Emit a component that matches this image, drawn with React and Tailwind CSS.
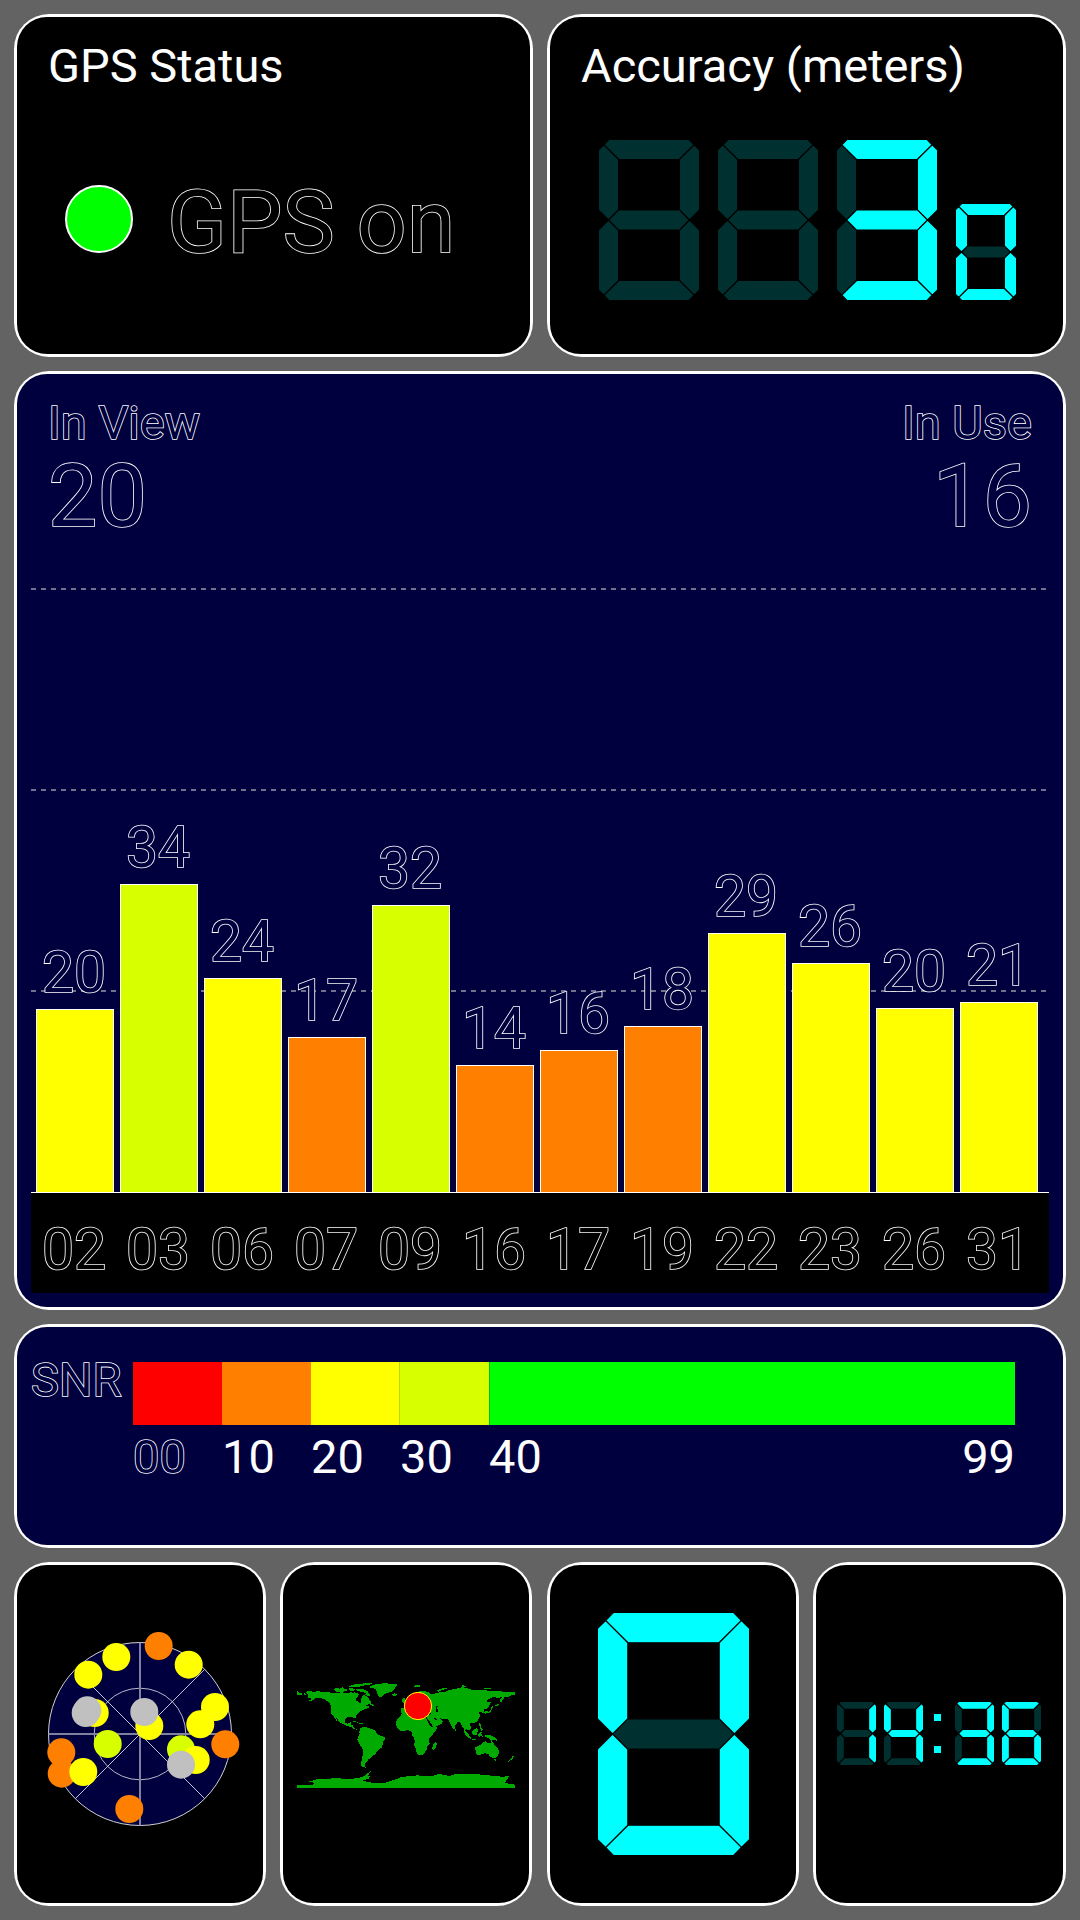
const CYAN = "#00ffff";
const DIM = "#003030";

const SEGMENTS = {
  a: [[0.27, 0.27], [0.53, 0], [4.47, 0], [4.73, 0.27], [4, 1], [1, 1]],
  b: [[5, 0.53], [4.73, 0.27], [4, 1], [4, 3.5], [4.5, 4], [5, 3.5]],
  c: [[5, 7.47], [4.73, 7.73], [4, 7], [4, 4.5], [4.5, 4], [5, 4.5]],
  d: [[0.27, 7.73], [0.53, 8], [4.47, 8], [4.73, 7.73], [4, 7], [1, 7]],
  e: [[0, 7.47], [0.27, 7.73], [1, 7], [1, 4.5], [0.5, 4], [0, 4.5]],
  f: [[0, 0.53], [0.27, 0.27], [1, 1], [1, 3.5], [0.5, 4], [0, 3.5]],
  g: [[0.5, 4], [1, 3.5], [4, 3.5], [4.5, 4], [4, 4.5], [1, 4.5]],
};

const LIT = {
  0: "abcdef",
  1: "bc",
  3: "abcdg",
  4: "bcfg",
  6: "acdefg",
};

/* The view box is trimmed by half a gap so the outer edges stay flush. */
function Digit({ value, className, width }) {
  const lit = LIT[value] || "";
  const keys = Object.keys(SEGMENTS).sort((x, y) => lit.includes(x) - lit.includes(y));
  const trim = (0.6 * 5) / width;
  return (
    <svg
      viewBox={`${trim} ${trim} ${5 - 2 * trim} ${8 - 2 * trim}`}
      preserveAspectRatio="none"
      className={className}
    >
      {keys.map((k) => (
        <polygon
          key={k}
          points={SEGMENTS[k].map((p) => p.join(",")).join(" ")}
          fill={lit.includes(k) ? CYAN : DIM}
          stroke="#000"
          strokeWidth="1.2"
          vectorEffect="non-scaling-stroke"
        />
      ))}
    </svg>
  );
}

function Panel({ className = "", outer = "", children }) {
  return (
    <section className={"rounded-[35px] bg-white p-[3px] " + outer}>
      <div className={"h-full w-full rounded-[30px] " + className}>{children}</div>
    </section>
  );
}

const ON_BLACK = "font-[370] text-black [-webkit-text-stroke:1.6px_white] [paint-order:stroke_fill]";
const ON_NAVY = "font-[370] text-[#00003f] [-webkit-text-stroke:1.6px_white] [paint-order:stroke_fill]";

const BARS = [
  { id: "02", snr: 20, h: 183, color: "bg-[#ffff00]" },
  { id: "03", snr: 34, h: 308, color: "bg-[#d8ff00]" },
  { id: "06", snr: 24, h: 214, color: "bg-[#ffff00]" },
  { id: "07", snr: 17, h: 155, color: "bg-[#ff8000]" },
  { id: "09", snr: 32, h: 287, color: "bg-[#d8ff00]" },
  { id: "16", snr: 14, h: 127, color: "bg-[#ff8000]" },
  { id: "17", snr: 16, h: 142, color: "bg-[#ff8000]" },
  { id: "19", snr: 18, h: 166, color: "bg-[#ff8000]" },
  { id: "22", snr: 29, h: 259, color: "bg-[#ffff00]" },
  { id: "23", snr: 26, h: 229, color: "bg-[#ffff00]" },
  { id: "26", snr: 20, h: 184, color: "bg-[#ffff00]" },
  { id: "31", snr: 21, h: 190, color: "bg-[#ffff00]" },
];

const SCALE = [
  { label: "00", grow: 89, color: "bg-[#ff0000]" },
  { label: "10", grow: 89, color: "bg-[#ff8000]" },
  { label: "20", grow: 89, color: "bg-[#ffff00]" },
  { label: "30", grow: 89, color: "bg-[#d8ff00] border-l border-black/15" },
  { label: "40", grow: 526, color: "bg-[#00ff00] border-l border-black/25" },
];

const SATS = [
  [158.7, 86, "#ff8000"],
  [116.3, 97, "#ffff00"],
  [88.3, 114.7, "#ffff00"],
  [188.7, 104.7, "#ffff00"],
  [94.7, 153, "#ffff00"],
  [87.3, 150.3, "#c0c0c0"],
  [85.7, 153, "#c0c0c0"],
  [149.3, 166, "#ffff00"],
  [144.3, 152, "#c0c0c0"],
  [215, 147, "#ffff00"],
  [200.3, 164.3, "#ffff00"],
  [225.3, 184.3, "#ff8000"],
  [107.7, 184, "#d8ff00"],
  [181, 189.3, "#d8ff00"],
  [195.7, 200, "#ffff00"],
  [181, 204.7, "#c0c0c0"],
  [61.3, 192.3, "#ff8000"],
  [61.7, 213.7, "#ff8000"],
  [83.3, 212, "#ffff00"],
  [129.3, 249, "#ff8000"],
];

function SkyView() {
  const diag = 64.7;
  return (
    <svg viewBox="0 0 246 338" className="h-[338px] w-[246px]">
      <g transform="translate(-17 -5)">
        <circle cx="140" cy="174" r="91.5" fill="#00003f" stroke="#d0d0d0" strokeWidth="1" />
        <circle cx="140" cy="174" r="45.8" fill="none" stroke="#b8b8c8" strokeWidth="1" />
        <path d="M140 82.5V265.5M48.5 174H231.5" stroke="#80809f" strokeWidth="2" />
        <path
          d={`M${140 - diag} ${174 - diag}L${140 + diag} ${174 + diag}M${140 - diag} ${174 + diag}L${140 + diag} ${174 - diag}`}
          stroke="#d8d8e4"
          strokeWidth="0.9"
        />
        {SATS.map(([x, y, c], i) => (
          <circle key={i} cx={x} cy={y} r="14" fill={c} />
        ))}
      </g>
    </svg>
  );
}

const LAND = [
  /* North America */
  "M79 98L84 93L100 95L118 94L130 97L143 96L152 98L168 99L186 97L200 100L208 99L214 96L218 101L224 97L232 99L236 104L232 111L226 117L229 123L237 126L240 132L244 127L243 119L246 108L252 105L258 108L263 111L268 118L273 126L270 132L260 135L254 139L265 138L268 143L256 147L249 150L242 154L238 158L232 164L227 168L226 180L223 174L216 170L206 171L198 173L194 180L196 188L203 191L210 187L213 185L212 193L218 195L221 203L227 206L234 206L232 209L224 208L216 203L207 199L196 196L186 190L180 188L175 181L167 173L173 184L171 184L163 174L160 168L153 161L152 150L154 141L150 132L141 123L132 117L120 114L108 114L102 119L92 123L80 124L92 119L94 115L84 113L82 108L88 105L80 102Z",
  /* Arctic islands */
  "M160 88L170 84L180 86L188 82L195 88L202 86L200 93L190 95L178 96L166 94ZM206 80L218 74L236 71L262 70L278 69L270 74L254 76L246 79L234 80L220 82ZM205 86L216 84L224 88L220 93L210 92ZM228 88L242 86L256 90L266 95L264 99L272 104L268 109L256 105L258 99L246 96L234 93Z",
  /* Greenland */
  "M270 79L283 74L300 71L320 69L330 72L344 71L354 74L347 79L346 84L341 91L334 96L322 99L312 104L305 112L298 110L292 102L291 95L286 87L276 84L268 82Z",
  "M336 103L345 100L353 103L348 108L339 107Z",
  "M268 129L276 131L281 137L272 136Z",
  /* Caribbean */
  "M214 181L226 183L236 188L228 187L218 184ZM236 189L248 190L250 193L238 193Z",
  /* South America */
  "M240 205L246 202L256 201L270 205L282 210L289 217L292 223L304 228L314 232L316 238L309 246L308 254L304 264L296 268L290 276L284 284L277 287L272 294L265 298L263 304L257 309L254 317L256 321L247 321L242 316L244 305L246 293L249 281L249 268L243 259L236 248L232 238L234 229L239 222L238 214Z",
  /* Africa */
  "M366 160L378 157L390 157L392 163L404 168L412 166L432 168L440 178L446 190L453 202L471 202L468 211L459 222L450 231L447 240L449 252L442 260L440 268L434 278L427 284L415 285L410 279L407 266L402 254L405 242L401 233L396 225L394 214L384 210L370 213L360 212L352 204L348 196L349 184L355 174L361 169Z",
  "M468 246L471 251L467 264L462 270L457 267L458 256Z",
  /* Eurasia */
  "M364 144L374 144L379 138L374 131L368 129L366 118L373 114L378 124L388 124L392 114L396 104L406 98L418 94L434 93L448 98L450 103L462 101L472 99L484 96L496 96L508 90L522 87L536 85L545 81L560 84L568 88L585 90L606 90L624 92L644 93L664 94L684 97L704 95L705 105L690 107L684 111L675 110L670 117L664 126L660 127L660 118L668 111L656 113L638 112L624 118L619 124L633 127L628 137L620 146L610 149L614 158L608 161L604 154L596 158L600 165L598 175L590 185L578 190L568 189L572 200L572 208L564 212L558 204L556 212L563 226L567 234L560 230L553 218L551 206L545 196L539 185L532 187L526 196L526 206L520 208L514 198L508 184L502 178L494 177L480 175L488 184L484 192L470 199L458 202L450 192L442 178L440 170L430 164L412 160L404 153L396 152L384 150L376 158L364 158L362 150Z",
  /* Svalbard and arctic coast islands */
  "M400 78L412 75L424 77L418 82L404 82ZM470 91L482 86L500 83L504 85L490 89L476 95ZM542 77L552 76L560 80L548 82ZM608 83L620 84L636 86L628 88L612 87Z",
  /* Japan, Sakhalin, Kamchatka */
  "M612 155L620 153L627 155L632 150L634 139L636 148L632 157L622 160L614 161ZM636 146L642 137L638 136ZM646 136L656 131L662 124L656 135L648 139Z",
  /* South-east Asia */
  "M551 210L558 216L568 226L575 234L572 236L562 228L554 218ZM575 214L584 208L591 204L594 212L590 224L584 226L576 222ZM572 237L586 238L594 240L580 240ZM596 219L606 216L604 222L608 230L602 226L598 232L594 226ZM597 190L604 192L602 202L608 208L606 214L600 204ZM614 224L626 224L638 228L648 234L654 244L644 240L634 242L626 234L616 230ZM526 205L530 210L526 212Z",
  /* Australia and New Zealand */
  "M586 262L596 258L604 252L610 246L618 244L624 249L632 250L633 242L638 246L644 256L654 264L657 274L655 284L648 292L640 295L632 291L624 281L612 280L602 284L590 284L587 276ZM642 298L648 298L646 304ZM694 284L702 290L698 296L688 304L681 306L690 298L696 293Z",
  /* Antarctica */
  "M51 375L100 374L104 369L86 364L98 362L110 358L140 357L164 354L190 356L220 356L238 353L252 348L266 338L272 334L264 347L270 350L264 358L246 360L262 366L286 369L318 368L334 362L350 357L366 350L390 349L412 346L440 349L466 346L476 342L496 345L508 348L522 343L552 341L584 342L606 344L626 346L644 348L664 350L687 349L684 356L678 362L676 368L690 372L705 374L705 384L51 384Z",
  "M51 92L55 96L68 102L66 104L51 104ZM72 100L80 102L78 105L70 103ZM250 319L258 321L256 324Z",
];

const WATER = [
  "M466 138L473 138L472 146L475 153L474 157L468 154L469 146Z",
  "M440 174L446 181L454 192L458 200L454 199L446 188L440 178Z",
  "M462 172L468 176L474 180L470 181L464 177Z",
  "M430 158L452 160L450 164L434 163Z",
];

function WorldMap() {
  return (
    <svg viewBox="51 66 654 318" className="mt-0.5 h-[106px] w-[218px]" shapeRendering="crispEdges">
      <path d={LAND.join("")} fill="#00aa00" />
      <path d={WATER.join("")} fill="#000" />
      <circle cx="414" cy="138" r="41" fill="#ff0000" stroke="#ffff00" strokeWidth="3" shapeRendering="auto" />
    </svg>
  );
}

export default function App() {
  return (
    <main className="flex h-[1920px] w-[1080px] flex-col gap-3.5 overflow-hidden bg-[#636363] p-3.5 font-['Roboto',sans-serif] text-white">
      <div className="grid h-[343px] shrink-0 grid-cols-2 gap-3.5">
        <Panel className="bg-black pt-[21px] pl-[31px]">
          <h2 className="text-[47px] leading-[56px]">GPS Status</h2>
          <div className="mt-[67px] ml-[17px] flex h-[115px] items-center">
            <span className="size-[68px] rounded-full border-2 border-white bg-[#00ff00]" />
            <span className={"ml-[34px] pt-1.5 text-[88px] leading-none " + ON_BLACK}>GPS on</span>
          </div>
        </Panel>
        <Panel className="bg-black pt-[21px] pl-[31px]">
          <h2 className="text-[47px] leading-[56px]">Accuracy (meters)</h2>
          <div className="mt-[46px] ml-[18px] flex h-[160px] items-end gap-[19px]">
            <Digit width={100} className="h-[160px] w-[100px]" />
            <Digit width={100} className="h-[160px] w-[100px]" />
            <Digit value="3" width={100} className="h-[160px] w-[100px]" />
            <Digit value="0" width={60} className="h-[96px] w-[60px]" />
          </div>
        </Panel>
      </div>

      <div className="grid h-[939px] shrink-0">
        <Panel className="flex flex-col bg-[#00003f] px-3.5 pt-[21px] pb-3.5">
          <div className="flex justify-between px-[17px]">
            <div>
              <div className={"text-[47px] leading-[56px] " + ON_NAVY}>In View</div>
              <div className={"text-[88px] leading-[90px] " + ON_NAVY}>20</div>
            </div>
            <div className="text-right">
              <div className={"text-[47px] leading-[56px] " + ON_NAVY}>In Use</div>
              <div className={"text-[88px] leading-[90px] " + ON_NAVY}>16</div>
            </div>
          </div>
          <div className="relative mt-auto h-[605px] border-b border-white">
            <svg className="absolute inset-0 h-full w-full" viewBox="0 0 1018 604" preserveAspectRatio="none">
              <path
                d="M0 1H1016M0 202H1016M0 403H1016"
                stroke="#72728f"
                strokeWidth="2"
                strokeDasharray="5 5"
              />
            </svg>
            <div className="relative flex h-full items-end gap-1.5 pl-[5px]">
              {BARS.map((b) => (
                <div key={b.id} className="flex w-[78px] flex-col items-center">
                  <span className={"pr-0.5 text-[57px] leading-[58px] " + ON_NAVY}>{b.snr}</span>
                  <span
                    className={"mt-[7px] w-full border border-b-0 border-white " + b.color}
                    style={{ height: b.h }}
                  />
                </div>
              ))}
            </div>
          </div>
          <div className="flex h-[100px] w-[1018px] shrink-0 gap-1.5 bg-black pt-7 pl-[5px]">
            {BARS.map((b) => (
              <span key={b.id} className={"w-[78px] pr-0.5 text-center text-[57px] leading-[58px] " + ON_BLACK}>
                {b.id}
              </span>
            ))}
          </div>
        </Panel>
      </div>

      <div className="grid h-[224px] shrink-0">
        <Panel className="flex bg-[#00003f] pt-[35px] pl-3.5">
          <div className={"-mt-[10px] w-[102px] text-[47px] leading-[56px] " + ON_NAVY}>SNR</div>
          <div className="w-[882px]">
            <div className="flex h-[63px]">
              {SCALE.map((s) => (
                <div key={s.label} className={s.color} style={{ flex: `${s.grow} 0 0px` }} />
              ))}
            </div>
            <div className="mt-1 flex text-[47px] leading-[56px]">
              {SCALE.map((s, i) => (
                <div key={s.label} className="flex justify-between" style={{ flex: `${s.grow} 0 0px` }}>
                  <span className={i === 0 ? ON_NAVY : ""}>{s.label}</span>
                  {i === 4 && <span>99</span>}
                </div>
              ))}
            </div>
          </div>
        </Panel>
      </div>

      <div className="grid h-[344px] shrink-0 grid-cols-[252px_253px_252px_253px] gap-3.5">
        <Panel className="overflow-hidden bg-black">
          <SkyView />
        </Panel>
        <Panel outer="mr-px" className="flex items-center justify-center bg-black">
          <WorldMap />
        </Panel>
        <Panel className="flex items-center justify-center bg-black pl-px">
          <Digit value="0" width={151} className="h-[242px] w-[151px]" />
        </Panel>
        <Panel className="flex items-center justify-center bg-black pr-px pb-px">
          <div className="flex items-center">
            <Digit value="1" width={39} className="mr-2 h-[63px] w-[39px]" />
            <Digit value="4" width={39} className="h-[63px] w-[39px]" />
            <div className="mr-3.5 ml-[11px] flex flex-col gap-[25px]">
              <span className="size-[7px] bg-[#00ffff]" />
              <span className="size-[7px] bg-[#00ffff]" />
            </div>
            <Digit value="3" width={39} className="mr-2 h-[63px] w-[39px]" />
            <Digit value="6" width={39} className="h-[63px] w-[39px]" />
          </div>
        </Panel>
      </div>
    </main>
  );
}
